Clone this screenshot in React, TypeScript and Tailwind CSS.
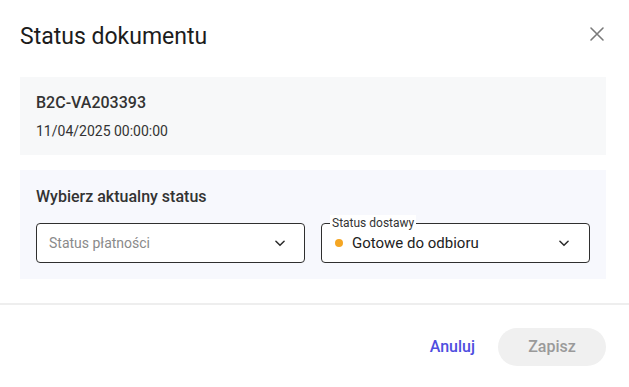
import React from 'react';

// ── Small pieces ─────────────────────────────────────────────

const Chevron: React.FC = () => (
  <svg width="14" height="14" viewBox="0 0 24 24" fill="none" aria-hidden="true">
    <path d="M5 9l7 7 7-7" stroke="#2b2b2b" strokeWidth="2.6" strokeLinecap="round" strokeLinejoin="round" />
  </svg>
);

const CloseIcon: React.FC = () => (
  <svg width="16" height="16" viewBox="0 0 16 16" fill="none" aria-hidden="true">
    <path d="M2 2l12 12M14 2L2 14" stroke="#7a7a7a" strokeWidth="1.6" strokeLinecap="round" />
  </svg>
);

// ── Dialog ───────────────────────────────────────────────────

export default function App() {
  return (
    <div
      className="w-[629px] h-[387px] bg-white flex flex-col"
      style={{ fontFamily: 'Roboto, "Liberation Sans", sans-serif' }}
    >
      <div className="flex items-start justify-between pl-5 pr-[22px] pt-[22px] h-[77px]">
        <h2 className="text-[23px] leading-[30px] text-[#1c1c1c]">Status dokumentu</h2>
        <button className="w-5 h-5 flex items-center justify-center mt-[2px]">
          <CloseIcon />
        </button>
      </div>

      <div className="pl-5 pr-[23px] flex flex-col gap-[15px]">
        <div className="bg-[#f7f8f9] h-[78px] px-4 pt-[14px]">
          <div className="text-[16px] leading-6 font-medium text-[#333]">B2C-VA203393</div>
          <div className="text-[14px] leading-5 mt-[6px] text-[#333]">11/04/2025 00:00:00</div>
        </div>

        <div className="bg-[#f7f8fd] h-[109px] px-4 pt-[15px]">
          <div className="text-[16px] leading-6 font-medium text-[#333]">Wybierz aktualny status</div>
          <div className="grid grid-cols-2 gap-4 mt-[14px]">
            <div className="h-10 bg-white border border-[#2f2f2f] rounded-[4px] flex items-center justify-between pl-3 pr-[17px]">
              <span className="text-[14px] text-[#8a8a8a]">Status płatności</span>
              <Chevron />
            </div>
            <div className="relative h-10 bg-white border border-[#2f2f2f] rounded-[4px] flex items-center justify-between pl-[13px] pr-[18px]">
              <span className="absolute -top-[9px] left-2 bg-white px-[2px] text-[12px] leading-4 text-[#333]">
                Status dostawy
              </span>
              <div className="flex items-center gap-[9px]">
                <span className="w-2 h-2 rounded-full bg-[#f5a623]" />
                <span className="text-[15px] text-[#222]">Gotowe do odbioru</span>
              </div>
              <Chevron />
            </div>
          </div>
        </div>
      </div>

      <div className="mt-6 h-[2px] bg-[#eeeeee]" />

      <div className="flex items-center justify-end gap-[23px] pr-[23px] pt-[23px]">
        <button className="text-[16px] font-medium text-[#4f4ee0]">Anuluj</button>
        <button className="w-[108px] h-[38px] rounded-full bg-[#f0f0f0] text-[16px] font-medium text-[#9a9a9a]">
          Zapisz
        </button>
      </div>
    </div>
  );
}
